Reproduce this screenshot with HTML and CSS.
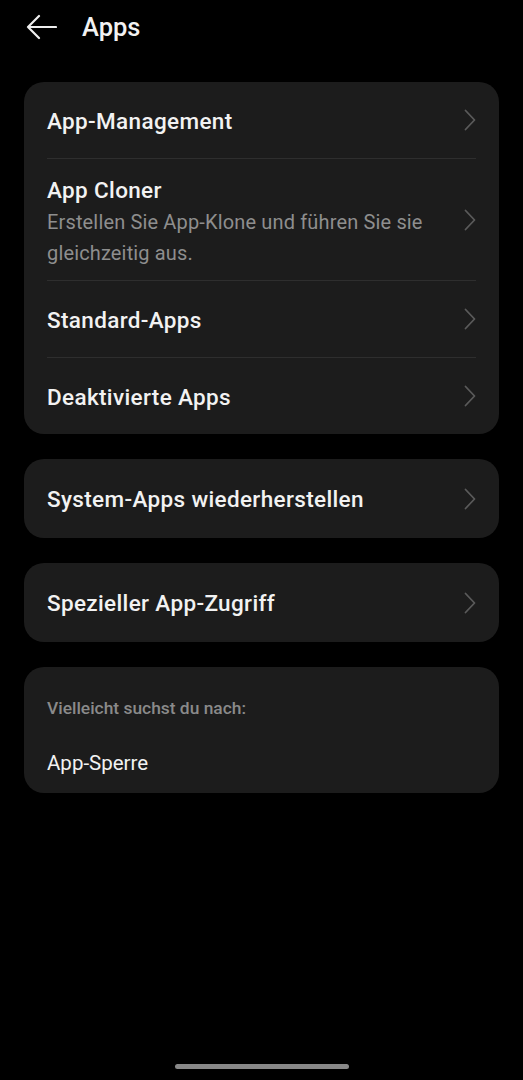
FILE: index.html
```html
<!DOCTYPE html>
<html lang="de">
<head>
<meta charset="UTF-8" />
<meta name="viewport" content="width=device-width, initial-scale=1" />
<title>Apps</title>
<link rel="stylesheet" href="styles.css">
</head>
<body>

<div class="header">
  <svg class="back" width="32" height="26" viewBox="0 0 32 26">
    <path d="M31 13H3M14 2L3 13l11 11" fill="none" stroke="#eee" stroke-width="2.2" stroke-linecap="round" stroke-linejoin="round"/>
  </svg>
  <h1>Apps</h1>
</div>

<div class="card">
  <div class="row">
    <div class="text"><div class="title">App-Management</div></div>
    <svg class="chev" width="12" height="22" viewBox="0 0 12 22"><path d="M1.5 1.5l9 9.5-9 9.5" /></svg>
  </div>
  <div class="row tall">
    <div class="text">
      <div class="title">App Cloner</div>
      <div class="sub">Erstellen Sie App-Klone und führen Sie sie gleichzeitig aus.</div>
    </div>
    <svg class="chev" width="12" height="22" viewBox="0 0 12 22"><path d="M1.5 1.5l9 9.5-9 9.5" /></svg>
  </div>
  <div class="row">
    <div class="text"><div class="title">Standard-Apps</div></div>
    <svg class="chev" width="12" height="22" viewBox="0 0 12 22"><path d="M1.5 1.5l9 9.5-9 9.5" /></svg>
  </div>
  <div class="row">
    <div class="text"><div class="title">Deaktivierte Apps</div></div>
    <svg class="chev" width="12" height="22" viewBox="0 0 12 22"><path d="M1.5 1.5l9 9.5-9 9.5" /></svg>
  </div>
</div>

<div class="card">
  <div class="row single">
    <div class="text"><div class="title">System-Apps wiederherstellen</div></div>
    <svg class="chev" width="12" height="22" viewBox="0 0 12 22"><path d="M1.5 1.5l9 9.5-9 9.5" /></svg>
  </div>
</div>

<div class="card">
  <div class="row single">
    <div class="text"><div class="title">Spezieller App-Zugriff</div></div>
    <svg class="chev" width="12" height="22" viewBox="0 0 12 22"><path d="M1.5 1.5l9 9.5-9 9.5" /></svg>
  </div>
</div>

<div class="card suggest">
  <div class="hint">Vielleicht suchst du nach:</div>
  <div class="link">App-Sperre</div>
</div>

<div class="homebar"></div>

</body>
</html>
```

FILE: styles.css
```css
body {
  margin: 0;
  background: #000;
  font-family: Roboto, "Noto Sans", sans-serif;
  color: #f2f2f2;
  height: 1080px;
  position: relative;
}
.header {
  display: flex;
  align-items: center;
  height: 54px;
  padding-left: 25px;
}
.back {
  margin-right: 25px;
}
h1 {
  margin: 0;
  font-size: 25.5px;
  font-weight: 500;
  color: #f2f2f2;
}
.card {
  background: #1c1c1c;
  border-radius: 20px;
  margin: 28px 24px 0;
  padding: 0 23px 0 23px;
}
.card + .card {
  margin-top: 25px;
}
.row {
  display: flex;
  align-items: center;
  min-height: 76px;
  border-bottom: 1px solid #2e2e2e;
}
.row:last-child {
  border-bottom: none;
}
.row.tall {
  min-height: 121px;
}
.row.tall .text {
  padding-top: 7px;
}
.row.single {
  min-height: 79px;
}
.text {
  flex: 1;
  padding-top: 1px;
}
.title {
  font-size: 22.5px;
  font-weight: 500;
  letter-spacing: 0.35px;
  color: #f2f2f2;
}
.sub {
  font-size: 20px;
  line-height: 31px;
  letter-spacing: 0.15px;
  color: #8e8e8e;
  margin-top: 4px;
  padding-right: 30px;
}
.chev {
  flex: none;
  margin-left: 10px;
  margin-right: 0;
}
.chev path {
  fill: none;
  stroke: #5a5a5a;
  stroke-width: 1.8;
  stroke-linecap: round;
  stroke-linejoin: round;
}
.suggest {
  padding-top: 31px;
  padding-bottom: 18px;
}
.hint {
  font-size: 17.4px;
  font-weight: 500;
  color: #8a8a8a;
}
.link {
  font-size: 20.5px;
  color: #f2f2f2;
  margin-top: 33px;
}
.homebar {
  position: absolute;
  left: 175px;
  top: 1064px;
  width: 174px;
  height: 5px;
  border-radius: 3px;
  background: #888;
}
```
